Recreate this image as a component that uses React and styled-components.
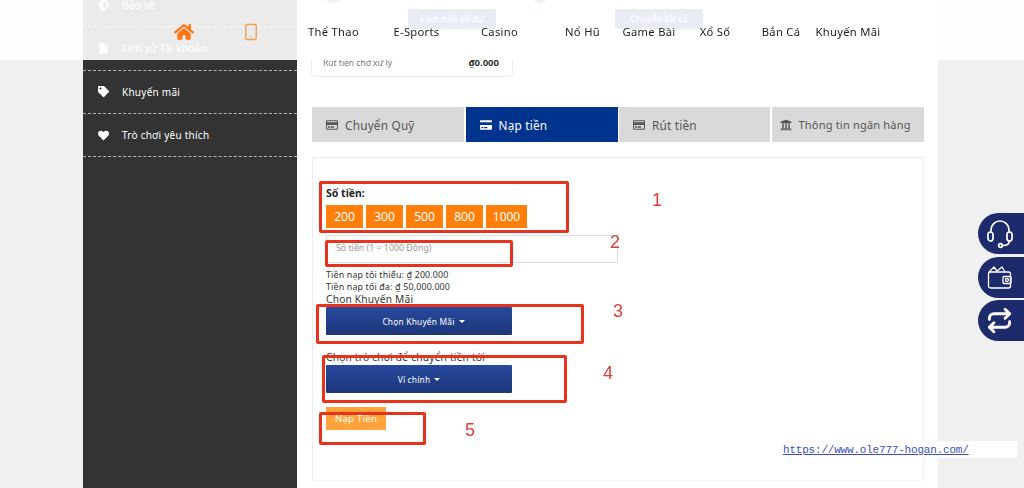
import React from 'react';
import styled, { createGlobalStyle } from 'styled-components';
import { FaHome, FaShieldAlt, FaFile, FaTag, FaHeart, FaRegCreditCard, FaCreditCard, FaUniversity } from 'react-icons/fa';
import { Smartphone, Repeat } from 'lucide-react';

const FONT = '"Noto Sans", "Open Sans", sans-serif';

const GlobalStyle = createGlobalStyle`
  html, body {
    margin: 0;
    height: 488px;
    overflow: hidden;
    background: #f0f0f0;
    font-family: ${FONT};
  }
  * { box-sizing: border-box; }
`;

const navItems = [
  { label: 'Thể Thao', w: 83 },
  { label: 'E-Sports', w: 83 },
  { label: 'Casino', w: 83 },
  { label: 'Nổ Hũ', w: 83 },
  { label: 'Game Bài', w: 50 },
  { label: 'Xổ Số', w: 82 },
  { label: 'Bắn Cá', w: 50 },
  { label: 'Khuyến Mãi', w: 84 },
];

const sideItems = [
  { label: 'Bảo vệ', Icon: FaShieldAlt },
  { label: 'Lịch sử Tài khoản', Icon: FaFile },
  { label: 'Khuyến mãi', Icon: FaTag },
  { label: 'Trò chơi yêu thích', Icon: FaHeart },
];

const tabs = [
  { label: 'Chuyển Quỹ', Icon: FaRegCreditCard, w: 152 },
  { label: 'Nạp tiền', Icon: FaCreditCard, w: 152, active: true },
  { label: 'Rút tiền', Icon: FaRegCreditCard, w: 151 },
  { label: 'Thông tin ngân hàng', Icon: FaUniversity, w: 152, tight: true },
];

// red marks drawn over the screenshot
const marks = [
  { x: 319, y: 181, w: 250, h: 52 },
  { x: 325, y: 240, w: 188, h: 27 },
  { x: 316, y: 304, w: 268, h: 40 },
  { x: 322, y: 355, w: 245, h: 48 },
  { x: 319, y: 412, w: 107, h: 33 },
];

const markNumbers = [
  { n: 1, x: 652, y: 190 },
  { n: 2, x: 610, y: 232 },
  { n: 3, x: 613, y: 301 },
  { n: 4, x: 603, y: 363 },
  { n: 5, x: 465, y: 420 },
];

const Page = styled.div`
  display: flex;
  height: 508px;
  margin-top: -20px;
  padding-left: 83px;
`;

const Sidebar = styled.nav`
  width: 214px;
  flex: none;
  padding-top: 4px;
  background: #333;
`;

const SideRow = styled.div`
  display: flex;
  align-items: center;
  height: 43.3px;
  padding-left: 15px;
  border-bottom: 1px dashed #b5b5b5;
  color: #fff;
  font-size: 10px;
  letter-spacing: 0.25px;
  svg { width: 11px; height: 11px; margin-right: 13px; }
`;

const Main = styled.main`
  width: 641px;
  flex: none;
  padding: 0 14px;
  background: #fff;
`;

const BalanceRow = styled.div`
  display: flex;
  gap: 5px;
  height: 97px;
`;

const BalanceCard = styled.section`
  width: 202px;
  height: ${(p) => p.$h}px;
  padding: 2px 13px 0 11px;
  border: 1px solid #eee;
  border-radius: 4px;
`;

const Coin = styled.div`
  width: 20px;
  height: 20px;
  border-radius: 50%;
  background: #3f7fd0;
`;

const RefreshButton = styled.div`
  width: 88px;
  height: 20px;
  margin: 6px 3px 0 auto;
  border-radius: 2px;
  background: #2a4394;
  color: #fff;
  font-size: 9px;
  line-height: 20px;
  text-align: center;
`;

const BalanceLine = styled.div`
  display: flex;
  justify-content: space-between;
  margin-top: 27px;
  font-size: 8.5px;
  line-height: 14px;
  color: #777;
  b { color: #333; font-size: 9.5px; }
`;

const TabBar = styled.div`
  display: flex;
  gap: 1.5px;
  margin-top: 30px;
  margin-left: 1px;
`;

const Tab = styled.div`
  display: flex;
  align-items: center;
  width: ${(p) => p.$w}px;
  height: 35px;
  padding-left: ${(p) => (p.$tight ? 8 : 14)}px;
  background: ${(p) => (p.$active ? '#00338d' : '#d9d9d9')};
  color: ${(p) => (p.$active ? '#fff' : '#555')};
  font-size: ${(p) => (p.$tight ? 11 : 11.8)}px;
  letter-spacing: 0.2px;
  white-space: nowrap;
  svg { width: 12px; height: 12px; margin-right: 7px; flex: none; }
`;

const Panel = styled.section`
  height: 324px;
  margin: 15px 0 0 1px;
  padding: 28px 13px 0;
  border: 1px solid #eee;
  border-bottom-color: #f6f6f6;
`;

const FieldLabel = styled.div`
  font-size: 10.5px;
  line-height: 14px;
  font-weight: 700;
  color: #222;
`;

const Amounts = styled.div`
  display: flex;
  gap: 3px;
  margin-top: 5px;
`;

const AmountButton = styled.button`
  width: ${(p) => p.$w}px;
  height: 23px;
  padding: 0;
  border: 0;
  background: #ff7f0a;
  color: #fff;
  font: 12px ${FONT};
`;

const AmountInput = styled.input`
  display: block;
  width: 292px;
  height: 28px;
  margin-top: 7px;
  padding: 0 9px 3px;
  border: 1px solid #ddd;
  font: 8.8px ${FONT};
  &::placeholder { color: #999; opacity: 1; }
`;

const Limits = styled.div`
  margin-top: 6px;
`;

const Limit = styled.div`
  font-size: 8.9px;
  line-height: 12px;
  color: #333;
  letter-spacing: 0.15px;
`;

const SelectLabel = styled.div`
  margin-top: ${(p) => p.$top}px;
  font-size: 10.2px;
  line-height: 13px;
  color: #333;
  letter-spacing: 0.2px;
`;

const SelectButton = styled.button`
  display: flex;
  align-items: center;
  justify-content: center;
  width: 186px;
  height: 28px;
  margin-top: ${(p) => p.$top}px;
  padding: 0 0 0 ${(p) => p.$shift || 0}px;
  border: 0;
  border-radius: 1px;
  background: linear-gradient(#264a9e, #1e3579);
  color: #fff;
  font: 8.4px ${FONT};
  letter-spacing: 0.2px;
  &::after {
    content: '';
    margin-left: 4px;
    border-top: 3px solid #fff;
    border-left: 3px solid transparent;
    border-right: 3px solid transparent;
  }
`;

const SubmitButton = styled.button`
  display: block;
  width: 60px;
  height: 23px;
  margin-top: 14px;
  padding: 0;
  border: 0;
  background: #ffa33a;
  color: #fff;
  font: 9.5px ${FONT};
  letter-spacing: 0.3px;
`;

const Header = styled.header`
  position: fixed;
  top: 0;
  left: 0;
  right: 0;
  display: flex;
  align-items: center;
  height: 60px;
  padding: 4px 0 0 150px;
  background: rgba(255, 255, 255, 0.9);
`;

const IconCell = styled.div`
  display: flex;
  justify-content: center;
  width: ${(p) => p.$w}px;
  color: ${(p) => p.$color};
`;

const NavItem = styled.a`
  display: flex;
  justify-content: center;
  width: ${(p) => p.$w}px;
  flex: none;
  color: #222;
  font-size: 11.2px;
  line-height: 14px;
  letter-spacing: 0.3px;
  white-space: nowrap;
`;

const NavSpacer = styled.div`
  width: 7px;
`;

const FloatDock = styled.aside`
  position: fixed;
  top: 213px;
  right: 0;
  display: flex;
  flex-direction: column;
  gap: 2.5px;
`;

const FloatButton = styled.div`
  display: flex;
  align-items: center;
  justify-content: center;
  width: 46px;
  height: 41px;
  padding-right: 3px;
  border-radius: 21px 0 0 21px;
  background: #1d2b6d;
  color: #fff;
`;

const Mark = styled.div`
  position: fixed;
  left: ${(p) => p.$x}px;
  top: ${(p) => p.$y}px;
  width: ${(p) => p.$w}px;
  height: ${(p) => p.$h}px;
  border: 3px solid #e8321c;
  border-radius: 2px;
`;

const MarkNumber = styled.div`
  position: fixed;
  left: ${(p) => p.$x}px;
  top: ${(p) => p.$y}px;
  font: 18px/20px "Liberation Sans", sans-serif;
  color: #d8413b;
`;

const UrlStamp = styled.a`
  position: fixed;
  left: 781px;
  top: 441px;
  width: 236px;
  height: 17px;
  padding-left: 2px;
  background: #fff;
  color: #3b50bd;
  font: 11px/19px "Liberation Mono", monospace;
  letter-spacing: -0.2px;
  text-decoration: underline;
`;

const Headset = () => (
  <svg width="28" height="30" viewBox="0 0 28 30" fill="none" stroke="currentColor" strokeWidth="1.7" strokeLinecap="round">
    <path d="M5 13V11a9 9 0 0 1 18 0v2" />
    <rect x="2" y="13" width="5" height="9" rx="2.5" />
    <rect x="21" y="13" width="5" height="9" rx="2.5" />
    <path d="M23.5 22c0 3-3 4.500-7 4.500" />
    <circle cx="14.500" cy="26.500" r="1.800" />
  </svg>
);

const Wallet = () => (
  <svg width="26" height="26" viewBox="0 0 26 26" fill="none" stroke="currentColor" strokeWidth="1.300" strokeLinejoin="round">
    <path d="M2 8l5-5 3 4 5-4 3 5" />
    <rect x="1.500" y="8" width="22" height="16" rx="2" />
    <rect x="16" y="12.500" width="8" height="7" rx="1" />
    <circle cx="20" cy="16" r="1.500" />
  </svg>
);

export default function App() {
  return (
    <>
      <GlobalStyle />
      <Page>
        <Sidebar>
          {sideItems.map(({ label, Icon }) => (
            <SideRow key={label}>
              <Icon />
              {label}
            </SideRow>
          ))}
        </Sidebar>
        <Main>
          <BalanceRow>
            <BalanceCard $h={97}>
              <Coin />
              <RefreshButton>Làm mới số dư</RefreshButton>
              <BalanceLine>
                <span>Rút tiền chờ xử lý</span>
                <b>₫0.000</b>
              </BalanceLine>
            </BalanceCard>
            <BalanceCard $h={60}>
              <Coin />
              <RefreshButton>Chuyển tất cả</RefreshButton>
            </BalanceCard>
          </BalanceRow>
          <TabBar>
            {tabs.map(({ label, Icon, w, active, tight }) => (
              <Tab key={label} $w={w} $active={active} $tight={tight}>
                <Icon />
                {label}
              </Tab>
            ))}
          </TabBar>
          <Panel>
            <FieldLabel>Số tiền:</FieldLabel>
            <Amounts>
              {['200', '300', '500', '800', '1000'].map((v) => (
                <AmountButton key={v} $w={v === '1000' ? 41 : 37}>{v}</AmountButton>
              ))}
            </Amounts>
            <AmountInput placeholder="Số tiền (1 = 1000 Đồng)" />
            <Limits>
              <Limit>Tiền nạp tối thiểu: ₫ 200.000</Limit>
              <Limit>Tiền nạp tối đa: ₫ 50,000.000</Limit>
            </Limits>
            <SelectLabel $top={0}>Chọn Khuyến Mãi</SelectLabel>
            <SelectButton $top={1} $shift={9}>Chọn Khuyến Mãi</SelectButton>
            <SelectLabel $top={16}>Chọn trò chơi để chuyển tiền tới</SelectLabel>
            <SelectButton $top={1}>Ví chính</SelectButton>
            <SubmitButton>Nạp Tiền</SubmitButton>
          </Panel>
        </Main>
      </Page>

      <Header>
        <IconCell $w={67} $color="#ff7410"><FaHome size={20} /></IconCell>
        <IconCell $w={68} $color="#f79a45"><Smartphone size={18} strokeWidth={1.800} /></IconCell>
        <NavSpacer />
        {navItems.map((item) => (
          <NavItem key={item.label} $w={item.w}>{item.label}</NavItem>
        ))}
      </Header>

      <FloatDock>
        <FloatButton><Headset /></FloatButton>
        <FloatButton><Wallet /></FloatButton>
        <FloatButton><Repeat size={27} strokeWidth={2.600} /></FloatButton>
      </FloatDock>

      {marks.map((m) => (
        <Mark key={m.x + '-' + m.y} $x={m.x} $y={m.y} $w={m.w} $h={m.h} />
      ))}
      {markNumbers.map((m) => (
        <MarkNumber key={m.n} $x={m.x} $y={m.y}>{m.n}</MarkNumber>
      ))}

      <UrlStamp href="#">https://www.ole777-hogan.com/</UrlStamp>
    </>
  );
}
